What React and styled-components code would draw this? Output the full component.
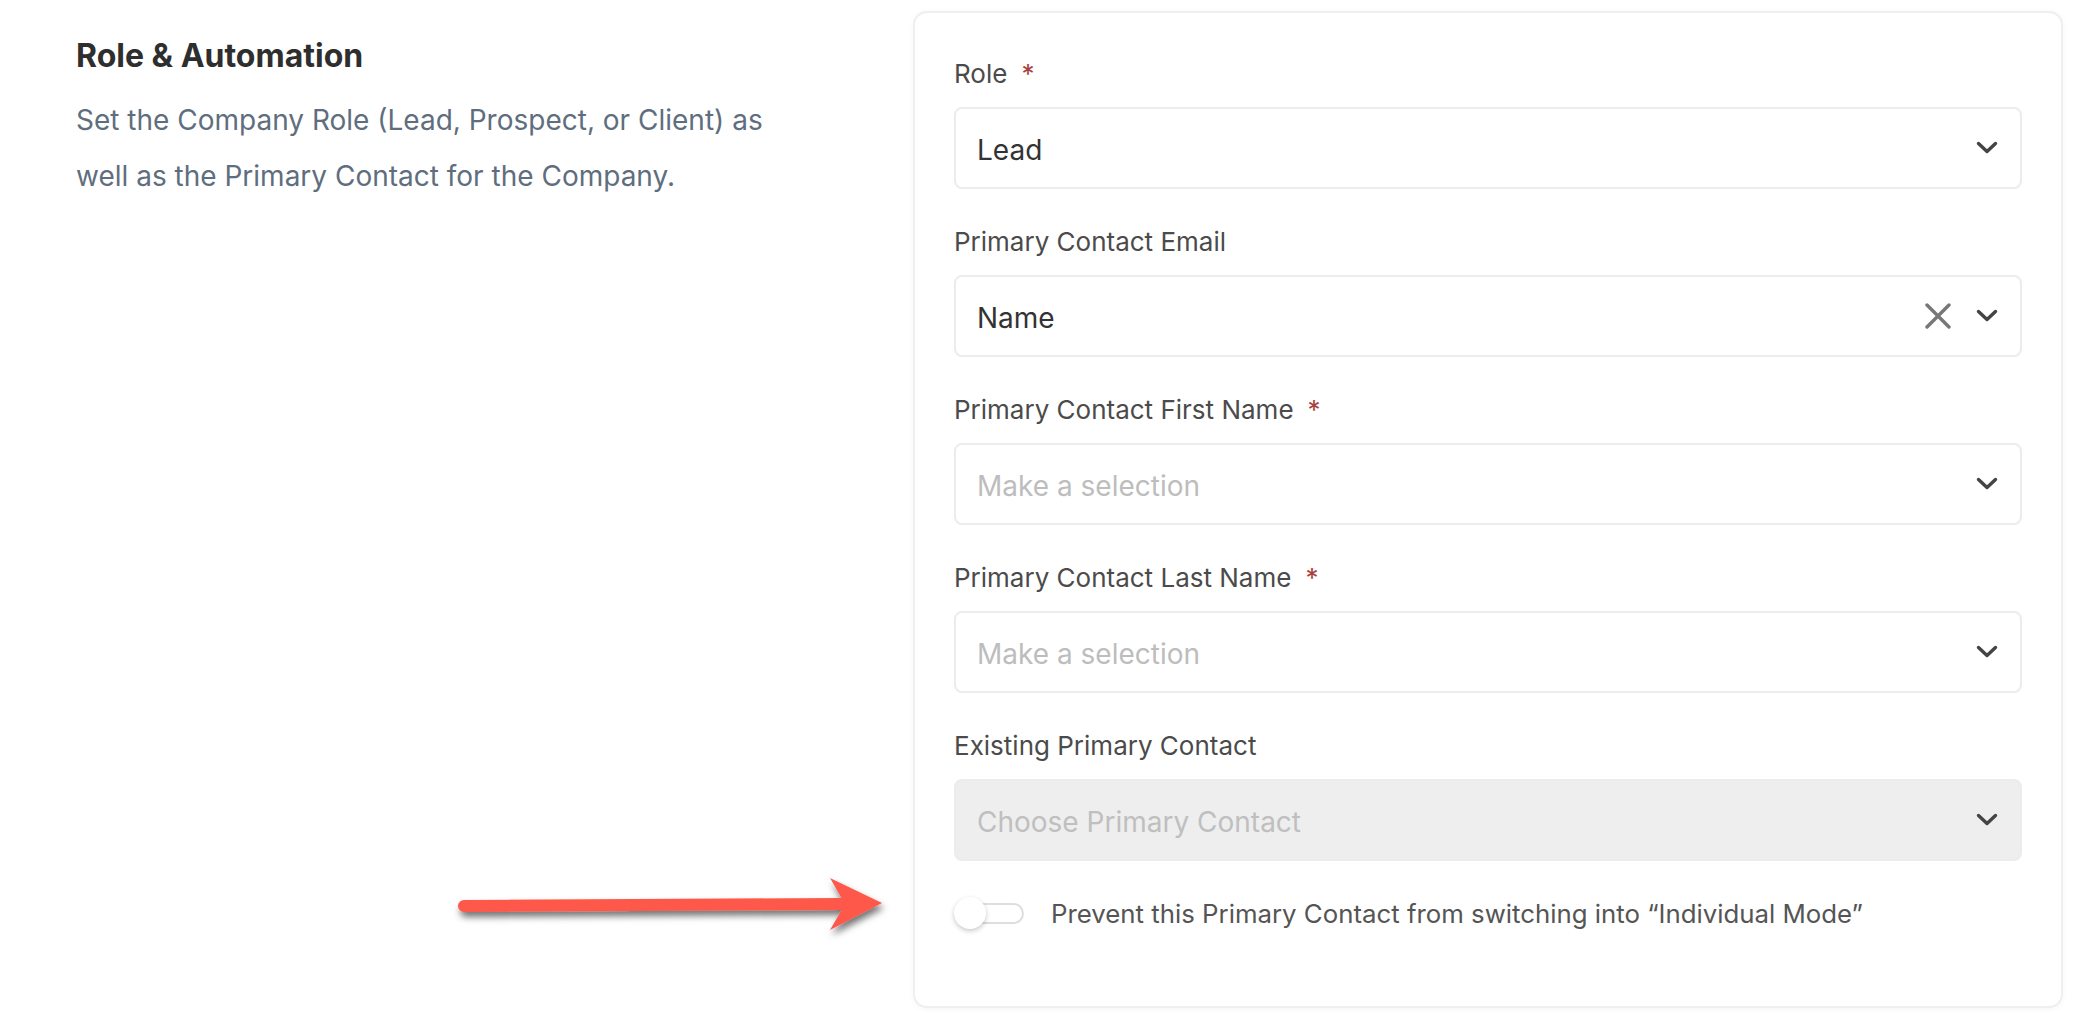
import React from 'react';
import styled, { createGlobalStyle } from 'styled-components';

const GlobalStyle = createGlobalStyle`
  html, body {
    margin: 0;
    padding: 0;
    background: #ffffff;
  }
  body {
    font-family: Inter, "Noto Sans", sans-serif;
    -webkit-font-smoothing: antialiased;
  }
  * {
    box-sizing: border-box;
  }
`;

const fields = [
  { label: 'Role', required: true, value: 'Lead' },
  { label: 'Primary Contact Email', value: 'Name', clearable: true },
  { label: 'Primary Contact First Name', required: true, placeholder: 'Make a selection' },
  { label: 'Primary Contact Last Name', required: true, placeholder: 'Make a selection' },
  { label: 'Existing Primary Contact', placeholder: 'Choose Primary Contact', disabled: true },
];

function Chevron() {
  return (
    <svg width="22" height="14" viewBox="0 0 22 14" fill="none">
      <path d="M2.5 2.5 L11 10.5 L19.5 2.5" stroke="#444" strokeWidth="3.4" strokeLinecap="round" strokeLinejoin="round" />
    </svg>
  );
}

function ClearIcon() {
  return (
    <svg width="26" height="26" viewBox="0 0 26 26" fill="none">
      <path d="M2 2 L24 24 M24 2 L2 24" stroke="#777" strokeWidth="3.4" strokeLinecap="round" />
    </svg>
  );
}

function Arrow() {
  return (
    <ArrowSvg width="460" height="90" viewBox="0 0 460 90">
      <defs>
        <filter id="arrowShadow" x="-10%" y="-50%" width="120%" height="200%">
          <feDropShadow dx="2" dy="5" stdDeviation="3.5" floodColor="#000" floodOpacity="0.55" />
        </filter>
      </defs>
      <g filter="url(#arrowShadow)">
        <path d="M24 46 L402 44" stroke="#fd584a" strokeWidth="12" strokeLinecap="round" />
        <polygon points="390,18 442,43 390,70 405,44" fill="#fd584a" />
      </g>
    </ArrowSvg>
  );
}

function App() {
  return (
    <>
      <GlobalStyle />
      <Page>
        <Intro>
          <Heading>Role &amp; Automation</Heading>
          <Description>
            Set the Company Role (Lead, Prospect, or Client) as well as the Primary Contact for the Company.
          </Description>
        </Intro>

        <Card>
          {fields.map((f) => (
            <Field key={f.label}>
              <Label>
                {f.label}
                {f.required && <Required>*</Required>}
              </Label>
              <SelectBox $disabled={f.disabled}>
                <Value $placeholder={!f.value} $disabled={f.disabled}>
                  {f.value || f.placeholder}
                </Value>
                <Controls>
                  {f.clearable && <ClearIcon />}
                  <Chevron />
                </Controls>
              </SelectBox>
            </Field>
          ))}

          <ToggleRow>
            <Switch>
              <Knob />
            </Switch>
            <ToggleText>Prevent this Primary Contact from switching into “Individual Mode”</ToggleText>
          </ToggleRow>
        </Card>

        <Arrow />
      </Page>
    </>
  );
}

export default App;

const Page = styled.div`
  position: relative;
  display: flex;
  justify-content: space-between;
  width: 2086px;
  min-height: 1016px;
  padding: 11px 23px 10px 76px;
`;

const Intro = styled.div`
  width: 740px;
  padding-top: 25px;
`;

const Heading = styled.h2`
  margin: 0;
  font-size: 32px;
  line-height: 40px;
  font-weight: 700;
  color: #2e2e2e;
`;

const Description = styled.p`
  margin: 16px 0 0;
  width: 720px;
  font-size: 28px;
  line-height: 56px;
  color: #5f6e7e;
`;

const Card = styled.div`
  width: 1150px;
  height: 997px;
  background: #ffffff;
  border: 2px solid #efefef;
  border-radius: 14px;
  box-shadow: 0 1px 6px rgba(0, 0, 0, 0.04);
  padding: 44px 39px 0;
`;

const Field = styled.div`
  margin-bottom: 36px;
`;

const Label = styled.div`
  display: flex;
  align-items: center;
  height: 32px;
  margin-bottom: 18px;
  font-size: 26px;
  color: #4b4b4b;
`;

const Required = styled.span`
  margin-left: 14px;
  color: #a8413d;
  font-size: 26px;
`;

const SelectBox = styled.div`
  display: flex;
  align-items: center;
  justify-content: space-between;
  height: 82px;
  padding: 3px 22px 0 21px;
  border: 2px solid #ececec;
  border-radius: 8px;
  background: ${(p) => (p.$disabled ? '#eeeeee' : '#ffffff')};
`;

const Value = styled.span`
  font-size: 28px;
  color: ${(p) => (p.$disabled ? '#bfbfbf' : p.$placeholder ? '#bdbdbd' : '#333333')};
`;

const Controls = styled.div`
  display: flex;
  align-items: center;
  gap: 25px;
  margin-top: -3px;
`;

const ToggleRow = styled.div`
  display: flex;
  align-items: center;
  margin-top: 3px;
  height: 32px;
`;

const Switch = styled.div`
  position: relative;
  width: 70px;
  height: 21px;
  border: 2px solid #dedede;
  border-radius: 11px;
  background: #ffffff;
`;

const Knob = styled.div`
  position: absolute;
  left: -2px;
  top: 50%;
  width: 32px;
  height: 32px;
  margin-top: -16px;
  border-radius: 50%;
  background: #ffffff;
  box-shadow: 0 2px 5px rgba(0, 0, 0, 0.22);
`;

const ToggleText = styled.span`
  margin-left: 27px;
  font-size: 25.8px;
  color: #555555;
`;

const ArrowSvg = styled.svg`
  position: absolute;
  left: 440px;
  top: 860px;
  overflow: visible;
`;
